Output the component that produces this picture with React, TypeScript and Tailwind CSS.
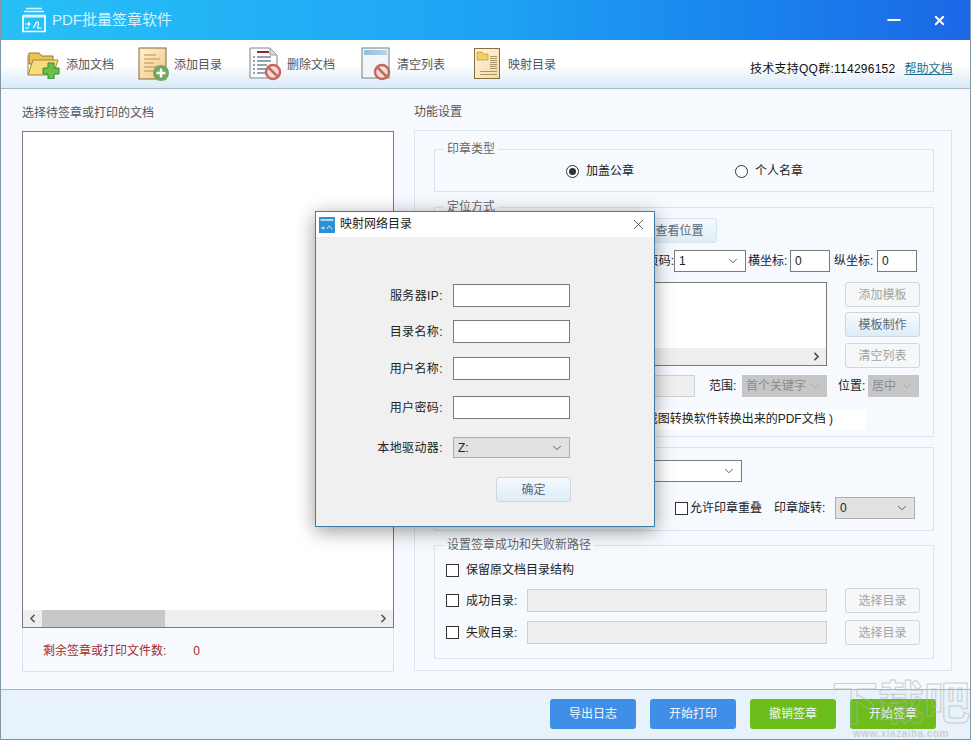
import { ChevronDown, ChevronLeft, ChevronRight, Minus, X } from 'lucide-react';
import type { ReactNode } from 'react';

const AppLogo = () => (
    <svg width="26" height="26" viewBox="0 0 26 26" fill="none" stroke="#fff" strokeWidth="1.6">
        <path d="M5 1.5h16M3 4.5h20" strokeOpacity="0.85" />
        <path d="M2 8.5h22v2M2 8.5v16h22v-16" fill="none" />
        <path d="M2 9.5h22" strokeOpacity="0.7" strokeWidth="2.4" />
        <path d="M4 17h5M7 15l2 2-2 2M4 21h4" strokeWidth="1.1" />
        <path d="M12 21c1-1 2-2 3-5 .5-1.500 2-1.500 2.500 0 .5 2-1.500 4-1 5h4" strokeWidth="1.2" />
    </svg>
);

const FolderAddIcon = () => (
    <svg width="34" height="30" viewBox="0 0 34 30">
        <path d="M2 4h10l3 3h11v8H2z" fill="#e9c45a" stroke="#9a7a22" />
        <path d="M1 26l5-15h25l-5 15z" fill="#f7dc7d" stroke="#a5862a" />
        <path d="M1 26V6" stroke="#a5862a" />
        <path d="M21 14h6v5h5v6h-5v5h-6v-5h-5v-6h5z" fill="#6cc04a" stroke="#2f8a33" />
    </svg>
);

const ListAddIcon = () => (
    <svg width="32" height="35" viewBox="0 0 32 35">
        <defs>
            <linearGradient id="noteA" x1="0" y1="0" x2="1" y2="1">
                <stop offset="0" stopColor="#fff0cf" />
                <stop offset="1" stopColor="#f3c987" />
            </linearGradient>
        </defs>
        <rect x="1" y="1" width="27" height="31" fill="url(#noteA)" stroke="#85683a" />
        <path d="M6 8h12M6 12h16M6 16h10M6 20h14M6 24h9" stroke="#b7924f" />
        <circle cx="23" cy="26" r="8" fill="#6fa765" />
        <path d="M23 21.500v9M18.500 26h9" stroke="#fff" strokeWidth="2.400" />
    </svg>
);

const NoSign = ({ cx, cy }: { cx: number; cy: number }) => (
    <g>
        <circle cx={cx} cy={cy} r="7" fill="#f4ded8" stroke="#c8675c" strokeWidth="2.500" />
        <path d={`M${cx - 5} ${cy - 5}L${cx + 5} ${cy + 5}`} stroke="#c8675c" strokeWidth="2.500" />
    </g>
);

const DocDeleteIcon = () => (
    <svg width="34" height="34" viewBox="0 0 34 34">
        <path d="M1 1h20l7 7v23H1z" fill="#fdfdfe" stroke="#7b8089" />
        <path d="M21 1v7h7z" fill="#d5dbe5" stroke="#9aa1ac" />
        <path d="M8 5h12" stroke="#8f2b36" strokeWidth="2" />
        <path d="M4 10h2M8 10h14M4 14h2M8 14h14M4 18h2M8 18h10M4 22h2M8 22h9M4 26h2M8 26h8" stroke="#39456b" />
        <NoSign cx={24} cy={25} />
    </svg>
);

const ListClearIcon = () => (
    <svg width="34" height="34" viewBox="0 0 34 34">
        <defs>
            <linearGradient id="barA" x1="0" y1="0" x2="1" y2="0">
                <stop offset="0" stopColor="#8fc0de" />
                <stop offset="1" stopColor="#b9d3e4" />
            </linearGradient>
        </defs>
        <rect x="1" y="1" width="27" height="30" fill="#f2f6fa" stroke="#6f8087" />
        <rect x="3" y="3" width="23" height="5" fill="url(#barA)" />
        <NoSign cx={21} cy={25} />
    </svg>
);

const MapIcon = () => (
    <svg width="27" height="32" viewBox="0 0 27 32">
        <defs>
            <linearGradient id="mapA" x1="0" y1="0" x2="1" y2="1">
                <stop offset="0" stopColor="#fff5de" />
                <stop offset="1" stopColor="#f6d9a8" />
            </linearGradient>
        </defs>
        <rect x="0.500" y="0.500" width="25" height="30" fill="url(#mapA)" stroke="#86703f" />
        <path d="M3 4h5l1.500 2H14v6H3z" fill="#f5cf5a" stroke="#bd9636" strokeWidth="0.700" />
        <path d="M16 8.500h7M16 10.500h7M16 12.500h7M16 14.500h7M16 16.500h7M16 18.500h7M16 20.500h7M6 23.500h17M6 26.500h17" stroke="#a99668" />
    </svg>
);

const tools = [
    { label: '添加文档', icon: <FolderAddIcon />, left: 'ml-[26px]', gap: 'gap-[5px]' },
    { label: '添加目录', icon: <ListAddIcon />, left: 'ml-[24px]', gap: 'gap-[4px]' },
    { label: '删除文档', icon: <DocDeleteIcon />, left: 'ml-[27px]', gap: 'gap-[4px]' },
    { label: '清空列表', icon: <ListClearIcon />, left: 'ml-[26px]', gap: 'gap-[2px]' },
    { label: '映射目录', icon: <MapIcon />, left: 'ml-[29px]', gap: 'gap-[7px]' },
];

const Group = ({ title, className, children }: { title: string; className: string; children?: ReactNode }) => (
    <fieldset className={`border border-[#dbe5ee] ${className}`}>
        <legend className="ml-[9px] px-[3px] text-[12px] leading-[16px] text-[#666]">{title}</legend>
        {children}
    </fieldset>
);

const SmallButton = ({ children, active, className = '' }: { children: ReactNode; active?: boolean; className?: string }) => (
    <div
        className={`flex h-[25px] w-[75px] items-center justify-center rounded-[3px] border border-[#d2d6da] text-[12px] ${
            active ? 'bg-gradient-to-b from-[#f6fafd] to-[#dcedf8] text-[#5a6a78]' : 'bg-[#f5f7f9] text-[#a3a3a3]'
        } ${className}`}
    >
        {children}
    </div>
);

const Select = ({ value, className, disabled, tone }: { value: string; className: string; disabled?: boolean; tone?: string }) => (
    <div className={`flex items-center justify-between pl-[4px] pr-[5px] text-[12px] ${tone ?? 'border border-[#7a7a7a] bg-white'} ${disabled ? 'text-[#8b8b8b]' : 'text-[#222]'} ${className}`}>
        <span>{value}</span>
        <ChevronDown size={14} strokeWidth={1.4} className={disabled ? 'text-[#a6a6a6]' : 'text-[#444]'} />
    </div>
);

const TextBox = ({ value, className }: { value?: string; className: string }) => (
    <div className={`flex items-center border border-[#7a7a7a] bg-white pl-[4px] text-[12px] text-[#222] ${className}`}>{value}</div>
);

const CheckBox = ({ className = '' }: { className?: string }) => (
    <div className={`h-[13px] w-[13px] shrink-0 border border-[#333] bg-white ${className}`} />
);

const DirRow = ({ label, className }: { label: string; className: string }) => (
    <div className={`flex items-center ${className}`}>
        <CheckBox className="ml-[11px]" />
        <span className="ml-[7px] w-[54px] text-[12px] text-[#222]">{label}</span>
        <div className="ml-[7px] h-[23px] w-[300px] border border-[#cfcfcf] bg-[#efefef]" />
        <SmallButton className="ml-[18px]">选择目录</SmallButton>
    </div>
);

const DialogField = ({ label, className }: { label: string; className: string }) => (
    <div className={`flex items-center ${className}`}>
        <span className="w-[127px] text-right text-[12px] tracking-[0.4px] text-[#222]">{label}</span>
        <div className="ml-[10px] h-[23px] w-[117px] border border-[#7a7a7a] bg-white" />
    </div>
);

const MapDialog = () => (
    <div className="absolute left-[314px] top-[211px] flex h-[316px] w-[340px] flex-col border border-[#3f7da3] bg-[#f0f0f0] shadow-[0_4px_18px_rgba(0,0,0,0.4)]">
        <div className="flex h-[25px] items-center bg-white pl-[3px] pr-[7px]">
            <svg width="16" height="16" viewBox="0 0 16 16">
                <rect width="16" height="16" fill="#2f8fd0" />
                <rect x="1.500" y="2" width="13" height="2" fill="#a8dcf5" />
                <path d="M2 11h3M4 9.500L5.500 11 4 12.500M8 12c1-1 1.500-3 2.500-3s1 3 3 3" stroke="#e6f6ff" fill="none" />
            </svg>
            <span className="mb-[1px] ml-[5px] text-[12px] text-[#222]">映射网络目录</span>
            <X size={17} strokeWidth={1} className="ml-auto text-[#222]" />
        </div>
        <DialogField label="服务器IP:" className="mt-[47px]" />
        <DialogField label="目录名称:" className="mt-[13px]" />
        <DialogField label="用户名称:" className="mt-[14px]" />
        <DialogField label="用户密码:" className="mt-[16px]" />
        <div className="mt-[18px] flex items-center">
            <span className="w-[127px] text-right text-[12px] tracking-[0.4px] text-[#222]">本地驱动器:</span>
            <Select value="Z:" className="ml-[10px] h-[21px] w-[117px]" tone="border border-[#adadad] bg-[#e1e1e1]" />
        </div>
        <div className="mt-[19px] flex justify-end pr-[83px]">
            <SmallButton active>确定</SmallButton>
        </div>
    </div>
);

export default function App() {
    return (
        <div className="relative flex h-[740px] w-[971px] flex-col overflow-hidden border-x border-b border-x-[#8297a6] border-b-[#7f929f] bg-[#f6fafe] font-['Liberation_Sans','Noto_Sans_CJK_SC',sans-serif]">
            <header className="-mx-px flex h-[40px] shrink-0 items-center bg-gradient-to-r from-[#28c0f7] via-[#1fa3f4] to-[#1c67e6] pl-[21px] pr-[24px]">
                <AppLogo />
                <span className="ml-[5px] text-[15px] text-[#d8f3fe]">PDF批量签章软件</span>
                <Minus size={20} strokeWidth={2.4} className="ml-auto text-white" />
                <X size={15} strokeWidth={3} className="ml-[28px] text-white" />
            </header>

            <div className="flex h-[49px] shrink-0 items-center border-b border-[#a9bbc9] bg-gradient-to-b from-white from-50% to-[#d9e9f5]">
                {tools.map((tool) => (
                    <div key={tool.label} className={`flex items-center ${tool.left} ${tool.gap}`}>
                        {tool.icon}
                        <span className="mt-[1px] w-[48px] text-[12px] text-[#555]">{tool.label}</span>
                    </div>
                ))}
                <span className="ml-[194px] mt-[9px] whitespace-nowrap text-[12px] tracking-[0.25px] text-[#111]">技术支持QQ群:114296152</span>
                <a className="ml-[9px] mt-[9px] whitespace-nowrap text-[12px] text-[#1c6f8f] underline">帮助文档</a>
            </div>

            <main className="flex h-[600px] shrink-0 pl-[21px]">
                <section className="w-[372px]">
                    <div className="mt-[16px] text-[12px] leading-[16px] text-[#555]">选择待签章或打印的文档</div>
                    <div className="mt-[10px] flex h-[497px] flex-col justify-end border border-[#7a7a7a] bg-white">
                        <div className="flex h-[17px] items-center bg-[#eeeeee]">
                            <ChevronLeft size={13} strokeWidth={3} className="ml-[3px] text-[#555]" />
                            <div className="ml-[3px] h-full w-[123px] bg-[#c8c8c8]" />
                            <ChevronRight size={13} strokeWidth={3} className="ml-auto mr-[3px] text-[#555]" />
                        </div>
                    </div>
                    <div className="flex h-[44px] items-center border border-t-0 border-[#dbe5ee] pl-[20px] pt-[2px] text-[12px] text-[#a52a2a]">
                        <span>剩余签章或打印文件数:</span>
                        <span className="ml-[27px]">0</span>
                    </div>
                </section>

                <section className="ml-[20px] w-[538px]">
                    <div className="mt-[15px] text-[12px] leading-[16px] text-[#555]">功能设置</div>
                    <div className="mt-[10px] h-[541px] border border-[#dbe5ee] pl-[19px] pr-[17px] pt-[10px]">
                        <Group title="印章类型" className="h-[51px]">
                            <div className="mt-[5px] flex items-center text-[12px] text-[#222]">
                                <div className="ml-[131px] flex h-[13px] w-[13px] items-center justify-center rounded-full border border-[#333] bg-white">
                                    <div className="h-[7px] w-[7px] rounded-full bg-[#333]" />
                                </div>
                                <span className="ml-[7px]">加盖公章</span>
                                <div className="ml-[101px] h-[13px] w-[13px] rounded-full border border-[#333] bg-white" />
                                <span className="ml-[7px]">个人名章</span>
                            </div>
                        </Group>

                        <Group title="定位方式" className="mt-[7px] h-[238px]">
                            <div className="mt-[3px] flex justify-end pr-[216px]">
                                <SmallButton active className="h-[23px] w-[62px] border-[#d5e3ee]">查看位置</SmallButton>
                            </div>
                            <div className="mt-[7px] flex items-center justify-end pr-[16px] text-[12px] text-[#222]">
                                <span>页码:</span>
                                <Select value="1" className="h-[22px] w-[72px]" />
                                <span className="ml-[2px] w-[40px]">横坐标:</span>
                                <TextBox value="0" className="ml-[2px] h-[22px] w-[40px]" />
                                <span className="ml-[4px] w-[40px]">纵坐标:</span>
                                <TextBox value="0" className="ml-[3px] h-[22px] w-[40px]" />
                            </div>
                            <div className="mt-[10px] flex items-start pl-[12px]">
                                <div className="flex h-[84px] w-[380px] flex-col justify-end border border-[#7a7a7a] bg-white">
                                    <div className="flex h-[17px] items-center justify-end bg-[#eeeeee] pr-[3px]">
                                        <ChevronRight size={13} strokeWidth={3} className="text-[#444]" />
                                    </div>
                                </div>
                                <div className="ml-[18px] flex flex-col">
                                    <SmallButton>添加模板</SmallButton>
                                    <SmallButton active className="mt-[5px]">模板制作</SmallButton>
                                    <SmallButton className="mt-[6px]">清空列表</SmallButton>
                                </div>
                            </div>
                            <div className="mt-[7px] flex items-center justify-end pr-[14px] text-[12px] text-[#222]">
                                <div className="h-[22px] w-[60px] border border-[#d0d0d0] bg-[#efefef]" />
                                <span className="ml-[14px] w-[33px]">范围:</span>
                                <Select value="首个关键字" disabled className="h-[22px] w-[85px]" tone="bg-[#c6c6c6]" />
                                <span className="ml-[11px] w-[30px]">位置:</span>
                                <Select value="居中" disabled className="h-[22px] w-[51px]" tone="bg-[#c6c6c6]" />
                            </div>
                            <div className="mt-[12px] flex justify-end pr-[67px]">
                                <span className="bg-white pl-[8px] pr-[33px] text-[12px] leading-[21px] text-[#222]">不支持由图片或截图转换软件转换出来的PDF文档 )</span>
                            </div>
                        </Group>

                        <Group title="&nbsp;" className="mt-[2px] h-[92px]">
                            <div className="mt-[5px] flex justify-end pr-[191px]">
                                <Select value="" className="h-[22px] w-[200px]" />
                            </div>
                            <div className="mt-[15px] flex items-center justify-end pr-[18px] text-[12px] text-[#222]">
                                <CheckBox />
                                <span className="ml-[2px]">允许印章重叠</span>
                                <span className="ml-[12px] w-[54px]">印章旋转:</span>
                                <Select value="0" className="ml-[7px] h-[22px] w-[80px]" tone="border border-[#adadad] bg-[#e1e1e1]" />
                            </div>
                        </Group>

                        <Group title="设置签章成功和失败新路径" className="mt-[6px] h-[122px]">
                            <div className="mt-[8px] flex items-center">
                                <CheckBox className="ml-[11px]" />
                                <span className="ml-[7px] text-[12px] text-[#222]">保留原文档目录结构</span>
                            </div>
                            <DirRow label="成功目录:" className="mt-[9px]" />
                            <DirRow label="失败目录:" className="mt-[7px]" />
                        </Group>
                    </div>
                </section>
            </main>

            <footer className="flex flex-1 items-center justify-end gap-[14px] border-t border-[#a3b5c3] bg-[#e8f2fa] pb-[2px] pr-[34px]">
                {[
                    { label: '导出日志', color: 'bg-[#3f8fe9]' },
                    { label: '开始打印', color: 'bg-[#3f8fe9]' },
                    { label: '撤销签章', color: 'bg-[#6dbd1b]' },
                    { label: '开始签章', color: 'bg-[#6dbd1b]' },
                ].map((btn) => (
                    <div key={btn.label} className={`flex h-[30px] w-[86px] items-center justify-center rounded-[3px] text-[12px] text-[#f2f8ff] ${btn.color}`}>
                        {btn.label}
                    </div>
                ))}
            </footer>

            <MapDialog />

            <div className="pointer-events-none absolute right-[-6px] top-[680px] w-[150px] text-center leading-none text-transparent opacity-60">
                <div className="whitespace-nowrap text-[46px] font-bold leading-[46px] [-webkit-text-stroke:1px_#b4b4b4]">下载吧</div>
                <div className="mt-[3px] whitespace-nowrap text-[10px] font-bold tracking-[0.5px] text-[#b9b9b9]">www.xiazaiba.com</div>
            </div>
        </div>
    );
}
